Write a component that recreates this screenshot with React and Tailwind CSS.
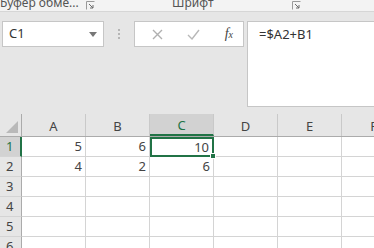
import React from 'react';

const COLS = ['A', 'B', 'C', 'D', 'E', 'F'];
const DATA = {
  1: { A: '5', B: '6', C: '10' },
  2: { A: '4', B: '2', C: '6' },
};

function Launcher({ className = '' }) {
  return (
    <svg width="9" height="9" viewBox="0 0 9 9" className={className}>
      <path d="M0.5 8.5V0.5H8.5" fill="none" stroke="#9a9a9a" strokeWidth="1" />
      <path d="M3 3L7 7M7 4V7H4" fill="none" stroke="#6a6a6a" strokeWidth="1" />
    </svg>
  );
}

export default function App() {
  return (
    <div className="w-[374px] h-[248px] overflow-hidden bg-[#e6e6e6] text-[#444] font-['Noto_Sans','Liberation_Sans',sans-serif]">
      {/* ribbon group labels */}
      <div className="h-[12px] flex items-end bg-[#f3f3f3] border-b border-[#d6d6d6] text-[12px] leading-none relative">
        <span className="absolute left-0 top-[-3px] text-[#555]">Буфер обме...</span>
        <Launcher className="absolute left-[86px] top-[1px]" />
        <span className="absolute left-[172px] top-[-3px] text-[#555]">Шрифт</span>
        <Launcher className="absolute left-[292px] top-[1px]" />
      </div>

      {/* formula bar */}
      <div className="flex h-[102px] pt-[9px]">
        <div className="ml-[2px] w-[102px] h-[26px] bg-white border border-[#c6c6c6] flex items-center justify-between pl-[6px] pr-[6px] text-[13px] text-[#333]">
          <span>C1</span>
          <svg width="8" height="5" viewBox="0 0 8 5"><path d="M0 0H8L4 5Z" fill="#777" /></svg>
        </div>
        <div className="w-[30px] flex justify-center pt-[8px]">
          <div className="flex flex-col gap-[2px]">
            <span className="w-[2px] h-[2px] bg-[#b5b5b5]" />
            <span className="w-[2px] h-[2px] bg-[#b5b5b5]" />
            <span className="w-[2px] h-[2px] bg-[#b5b5b5]" />
          </div>
        </div>
        <div className="w-[110px] h-[26px] bg-white border border-[#c6c6c6] flex items-center pl-[17px] pr-[10px] justify-between">
          <svg width="11" height="11" viewBox="0 0 11 11"><path d="M1 1L10 10M10 1L1 10" stroke="#b0b0b0" strokeWidth="1.4" /></svg>
          <svg width="13" height="11" viewBox="0 0 13 11"><path d="M1 6L5 10L12 1" fill="none" stroke="#b8b8b8" strokeWidth="1.4" /></svg>
          <span className="font-['Liberation_Serif',serif] italic text-[14px] text-[#444] leading-none">
            f<span className="text-[10px]">x</span>
          </span>
        </div>
        <div className="ml-[3px] flex-1 h-[86px] bg-white border border-[#c6c6c6] border-r-0 pl-[11px] pt-[3px] text-[13px] text-[#333]">
          =$A2+B1
        </div>
      </div>

      {/* grid */}
      <div className="text-[13px] leading-none">
        <div className="flex h-[23px] border-b border-[#ababab]">
          <div className="w-[22px] shrink-0 relative border-r border-[#ababab]">
            <svg width="12" height="12" viewBox="0 0 12 12" className="absolute right-[3px] bottom-[3px]">
              <path d="M12 0V12H0Z" fill="#b9b9b9" />
            </svg>
          </div>
          {COLS.map((c) => (
            <div
              key={c}
              className={`w-[64px] shrink-0 flex items-center justify-center border-r border-[#c9c9c9] pt-[2px] ${
                c === 'C' ? 'bg-[#d2d2d2] text-[#217346] border-b-2 border-b-[#217346]' : ''
              }`}
            >
              {c}
            </div>
          ))}
        </div>
        {[1, 2, 3, 4, 5, 6].map((r) => (
          <div key={r} className="flex h-[20px]">
            <div
              className={`w-[22px] shrink-0 flex items-center pl-[6px] border-b border-[#d4d4d4] ${
                r === 1 ? 'bg-[#d2d2d2] text-[#217346] border-r-2 border-r-[#217346]' : 'border-r border-r-[#ababab]'
              }`}
            >
              {r}
            </div>
            {COLS.map((c) => {
              const sel = r === 1 && c === 'C';
              return (
                <div
                  key={c}
                  className={`w-[64px] shrink-0 bg-white flex items-center justify-end pr-[3px] relative ${
                    sel ? 'border-2 border-[#217346] pr-[2px]' : 'border-r border-b border-[#d4d4d4]'
                  }`}
                >
                  {DATA[r]?.[c] ?? ''}
                  {sel && (
                    <span className="absolute right-[-4px] bottom-[-4px] w-[6px] h-[6px] bg-[#217346] border border-white z-10" />
                  )}
                </div>
              );
            })}
          </div>
        ))}
      </div>
    </div>
  );
}
